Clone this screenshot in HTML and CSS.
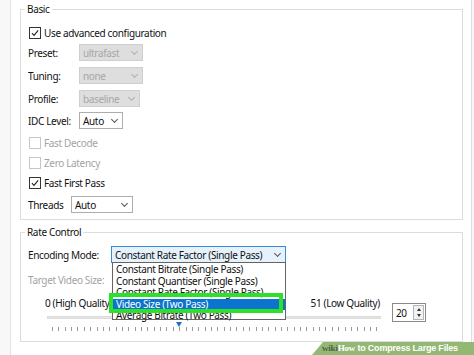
FILE: index.html
```html
<!DOCTYPE html>
<html>
<head>
<meta charset="utf-8">
<link rel="stylesheet" href="styles.css">
</head>
<body>
<div class="window">
  <fieldset class="group basic">
    <legend>Basic</legend>
    <div class="rows">
      <div class="row chk r1"><span class="box"><svg viewBox="0 0 12 12"><path d="M2.3 6.2 L4.8 8.8 L9.8 2.8"/></svg></span><span>Use advanced configuration</span></div>
      <div class="row sel r2"><span class="lbl w51">Preset:</span><span class="select off" style="width:64px">ultrafast<i class="chev"></i></span></div>
      <div class="row sel r3"><span class="lbl w51">Tuning:</span><span class="select off" style="width:64px">none<i class="chev"></i></span></div>
      <div class="row sel r4"><span class="lbl w51">Profile:</span><span class="select off" style="width:61px">baseline<i class="chev"></i></span></div>
      <div class="row sel r5"><span class="lbl w51">IDC Level:</span><span class="select" style="width:44px">Auto<i class="chev"></i></span></div>
      <div class="row chk r6 dis"><span class="box"></span><span>Fast Decode</span></div>
      <div class="row chk r7 dis"><span class="box"></span><span>Zero Latency</span></div>
      <div class="row chk r8"><span class="box"><svg viewBox="0 0 12 12"><path d="M2.3 6.2 L4.8 8.8 L9.8 2.8"/></svg></span><span>Fast First Pass</span></div>
      <div class="row sel r9"><span class="lbl w43">Threads</span><span class="select" style="width:62px">Auto<i class="chev"></i></span></div>
    </div>
  </fieldset>

  <fieldset class="group rate">
    <legend>Rate Control</legend>
    <div class="rows">
      <div class="row sel e1">
        <span class="lbl w83">Encoding Mode:</span>
        <span class="combo">
          <span class="select open" style="width:175px">Constant Rate Factor (Single Pass)<i class="chev"></i></span>
          <span class="list">
            <span class="item">Constant Bitrate (Single Pass)</span>
            <span class="item">Constant Quantiser (Single Pass)</span>
            <span class="item">Constant Rate Factor (Single Pass)</span>
            <span class="item cur">Video Size (Two Pass)</span>
            <span class="item">Average Bitrate (Two Pass)</span>
            <span class="mark"></span>
          </span>
        </span>
      </div>
      <div class="row e2 dis"><span>Target Video Size:</span></div>
      <div class="sliderrow">
        <div class="slider">
          <div class="slabels"><span>0 (High Quality)</span><span>51 (Low Quality)</span></div>
          <div class="track"></div>
          <span class="thumb" style="left:131px"></span>
          <div class="ticks">
            <i></i><i></i><i></i><i></i><i></i><i></i><i></i><i></i><i></i><i></i>
            <i></i><i></i><i></i><i></i><i></i><i></i><i></i><i></i><i></i><i></i>
            <i></i><i></i><i></i><i></i><i></i><i></i><i></i><i></i><i></i><i></i>
            <i></i><i></i><i></i><i></i><i></i><i></i><i></i><i></i><i></i><i></i>
            <i></i><i></i><i></i><i></i><i></i><i></i><i></i><i></i><i></i><i></i>
            <i></i><i></i>
          </div>
        </div>
        <div class="spin"><span class="val">20</span><span class="btns"><i class="up"></i><i class="dn"></i></span></div>
      </div>
    </div>
  </fieldset>
</div>
<div class="banner"><span class="wiki">wiki</span><span class="how">How</span> to Compress Large Files</div>
</body>
</html>
```
FILE: styles.css
```css
html, body {
  margin: 0;
  padding: 0;
}
body {
  width: 474px;
  height: 355px;
  overflow: hidden;
  background: #f8f8f8;
  font-family: "Noto Sans", "Open Sans", sans-serif;
  font-size: 10px;
  letter-spacing: -0.35px;
  color: #111;
  position: relative;
}
.window {
  margin-left: 10px;
  width: 462px;
  height: 355px;
  box-sizing: border-box;
  background: #fff;
  border-left: 1px solid #e2e2e2;
  border-right: 1px solid #dedede;
  padding-top: 3px;
}
.group {
  margin: 0 0 0 9px;
  padding: 0;
  width: 443px;
  box-sizing: border-box;
  min-inline-size: 0;
  border: 1px solid #dcdcdc;
}
.group legend {
  margin-left: 4px;
  padding: 0 2px;
  height: 12px;
  line-height: 12px;
  font-size: 10px;
}
.rate {
  margin-top: 6px;
}
.rows {
  display: flex;
  flex-direction: column;
  padding-left: 7px;
}
.basic .rows {
  padding-bottom: 6px;
}
.rate .rows {
  padding-bottom: 10px;
}
.row {
  display: flex;
  align-items: center;
  white-space: nowrap;
}
.row.chk { height: 14px; }
.row.sel { height: 17px; }
.r1 { margin-top: 11px; }
.r2 { margin-top: 4px; }
.r3, .r4 { margin-top: 6px; }
.r5 { margin-top: 5px; }
.r6 { margin-top: 7px; }
.r7, .r8, .r9 { margin-top: 6px; }
.e1 { margin-top: 8px; }
.e2 { margin-top: 10px; height: 14px; }
.dis { color: #a3a3a3; }
.box {
  width: 12px;
  height: 12px;
  box-sizing: border-box;
  border: 1px solid #333;
  margin: 0 3px 0 1px;
  background: #fff;
  display: flex;
}
.box svg {
  width: 10px;
  height: 10px;
  fill: none;
  stroke: #222;
  stroke-width: 1.3;
}
.dis .box { border-color: #c6c6c6; }
.lbl { flex: none; }
.w51 { width: 51px; }
.w43 { width: 43px; }
.w83 { width: 83px; }
.select {
  position: relative;
  display: flex;
  align-items: center;
  height: 17px;
  box-sizing: border-box;
  border: 1px solid #adadad;
  background: #fff;
  padding-left: 3px;
  color: #111;
}
.select.off {
  background: #dedede;
  border-color: #cfcfcf;
  color: #a6a6a6;
}
.select.open {
  background: #e5f1fb;
  border-color: #3b8ad6;
}
.chev {
  position: absolute;
  right: 5px;
  top: 4px;
  width: 4px;
  height: 4px;
  border-right: 1px solid #555;
  border-bottom: 1px solid #555;
  transform: rotate(45deg);
}
.off .chev { border-color: #b0b0b0; }
.combo {
  position: relative;
  display: block;
}
.list {
  position: absolute;
  left: 1px;
  top: 16px;
  width: 174px;
  height: 58px;
  box-sizing: border-box;
  border: 1px solid #646464;
  background: #fff;
  padding-top: 1px;
  display: flex;
  flex-direction: column;
  z-index: 2;
}
.item {
  display: block;
  height: 11.5px;
  line-height: 11.5px;
  padding-left: 3px;
  color: #111;
}
.item.cur {
  background: #0a74cf;
  color: #fff;
}
.mark {
  position: absolute;
  left: -4px;
  top: 30px;
  width: 174px;
  height: 20px;
  box-sizing: border-box;
  border: 4px solid #2fe02a;
}
.sliderrow {
  display: flex;
  margin-top: 10px;
}
.slider {
  position: relative;
  margin-left: 17px;
  width: 337px;
}
.slabels {
  display: flex;
  justify-content: space-between;
  height: 12px;
  line-height: 12px;
  padding-right: 2px;
}
.track {
  margin: 7px 0 0 2px;
  width: 334px;
  height: 3px;
  box-sizing: border-box;
  background: #e7e7e7;
  border: 1px solid #dcdcdc;
}
.thumb {
  position: absolute;
  top: 25px;
  width: 0;
  height: 0;
  border-left: 3px solid transparent;
  border-right: 3px solid transparent;
  border-top: 5px solid #1f6fc4;
}
.ticks {
  display: flex;
  justify-content: space-between;
  margin: 8px 0 0 7px;
  width: 326px;
  height: 4px;
}
.ticks i {
  width: 1px;
  height: 4px;
  background: #9a9a9a;
}
.spin {
  margin: 6px 0 0 10px;
  width: 34px;
  height: 19px;
  box-sizing: border-box;
  border: 1px solid #8a8a8a;
  display: flex;
  align-items: center;
  justify-content: space-between;
  background: #fff;
  font-size: 10px;
}
.spin .val { padding-left: 3px; }
.btns {
  margin-right: 1px;
  width: 11px;
  height: 15px;
  box-sizing: border-box;
  border: 1px solid #b5b5b5;
  background: #f2f2f2;
  display: flex;
  flex-direction: column;
  align-items: center;
  justify-content: space-evenly;
}
.btns .up, .btns .dn {
  width: 0;
  height: 0;
  border-left: 2.5px solid transparent;
  border-right: 2.5px solid transparent;
}
.btns .up { border-bottom: 3px solid #333; }
.btns .dn { border-top: 3px solid #333; }
.banner {
  position: absolute;
  right: 0;
  bottom: 0;
  width: 162px;
  height: 13px;
  background: #93b874;
  clip-path: polygon(11px 0, 100% 0, 100% 100%, 0 100%);
  color: #fff;
  font-family: "Liberation Sans", Arial, sans-serif;
  font-weight: bold;
  font-size: 9px;
  letter-spacing: -0.2px;
  line-height: 13px;
  padding-left: 10px;
  box-sizing: border-box;
  white-space: nowrap;
}
.banner .wiki {
  font-family: "Liberation Serif", serif;
  color: #4d5e44;
}
.banner .how {
  font-family: "Liberation Serif", serif;
}
```
